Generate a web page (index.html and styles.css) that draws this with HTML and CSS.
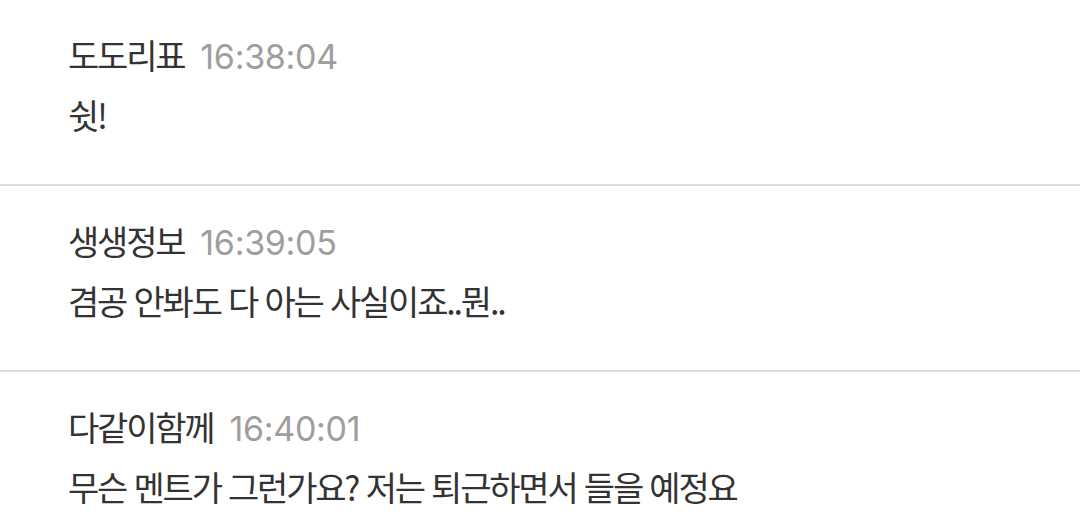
FILE: index.html
```html
<!DOCTYPE html>
<html lang="ko">
<head>
<meta charset="utf-8">
<link rel="stylesheet" href="styles.css">
</head>
<body>
<ul class="comments">
  <li class="comment">
    <div class="meta"><span class="name">도도리표</span><span class="time">16:38:04</span></div>
    <p class="text">쉿!</p>
  </li>
  <li class="comment">
    <div class="meta"><span class="name">생생정보</span><span class="time">16:39:05</span></div>
    <p class="text">겸공 안봐도 다 아는 사실이죠..뭔..</p>
  </li>
  <li class="comment">
    <div class="meta"><span class="name">다같이함께</span><span class="time">16:40:01</span></div>
    <p class="text">무슨 멘트가 그런가요? 저는 퇴근하면서 들을 예정요</p>
  </li>
</ul>
</body>
</html>
```
FILE: styles.css
```css
html, body {
  margin: 0;
  padding: 0;
  background: #ffffff;
}
body {
  font-family: "Noto Sans CJK KR", "Noto Sans", sans-serif;
  color: #333333;
  overflow: hidden;
}
.comments {
  list-style: none;
  margin: 0;
  padding: 0;
}
.comment {
  padding: 29px 0 43px 68px;
  border-bottom: 2px solid #dcdcdc;
}
.meta {
  display: flex;
  align-items: baseline;
  gap: 16px;
  height: 52px;
  line-height: 52px;
}
.name {
  font-size: 34px;
  letter-spacing: -2.2px;
  color: #333333;
}
.time {
  font-family: Inter, Roboto, sans-serif;
  font-size: 34px;
  letter-spacing: -0.3px;
  color: #9e9e9e;
}
.text {
  margin: 8px 0 0;
  font-size: 34px;
  line-height: 52px;
  letter-spacing: -2.2px;
  color: #333333;
}
```
